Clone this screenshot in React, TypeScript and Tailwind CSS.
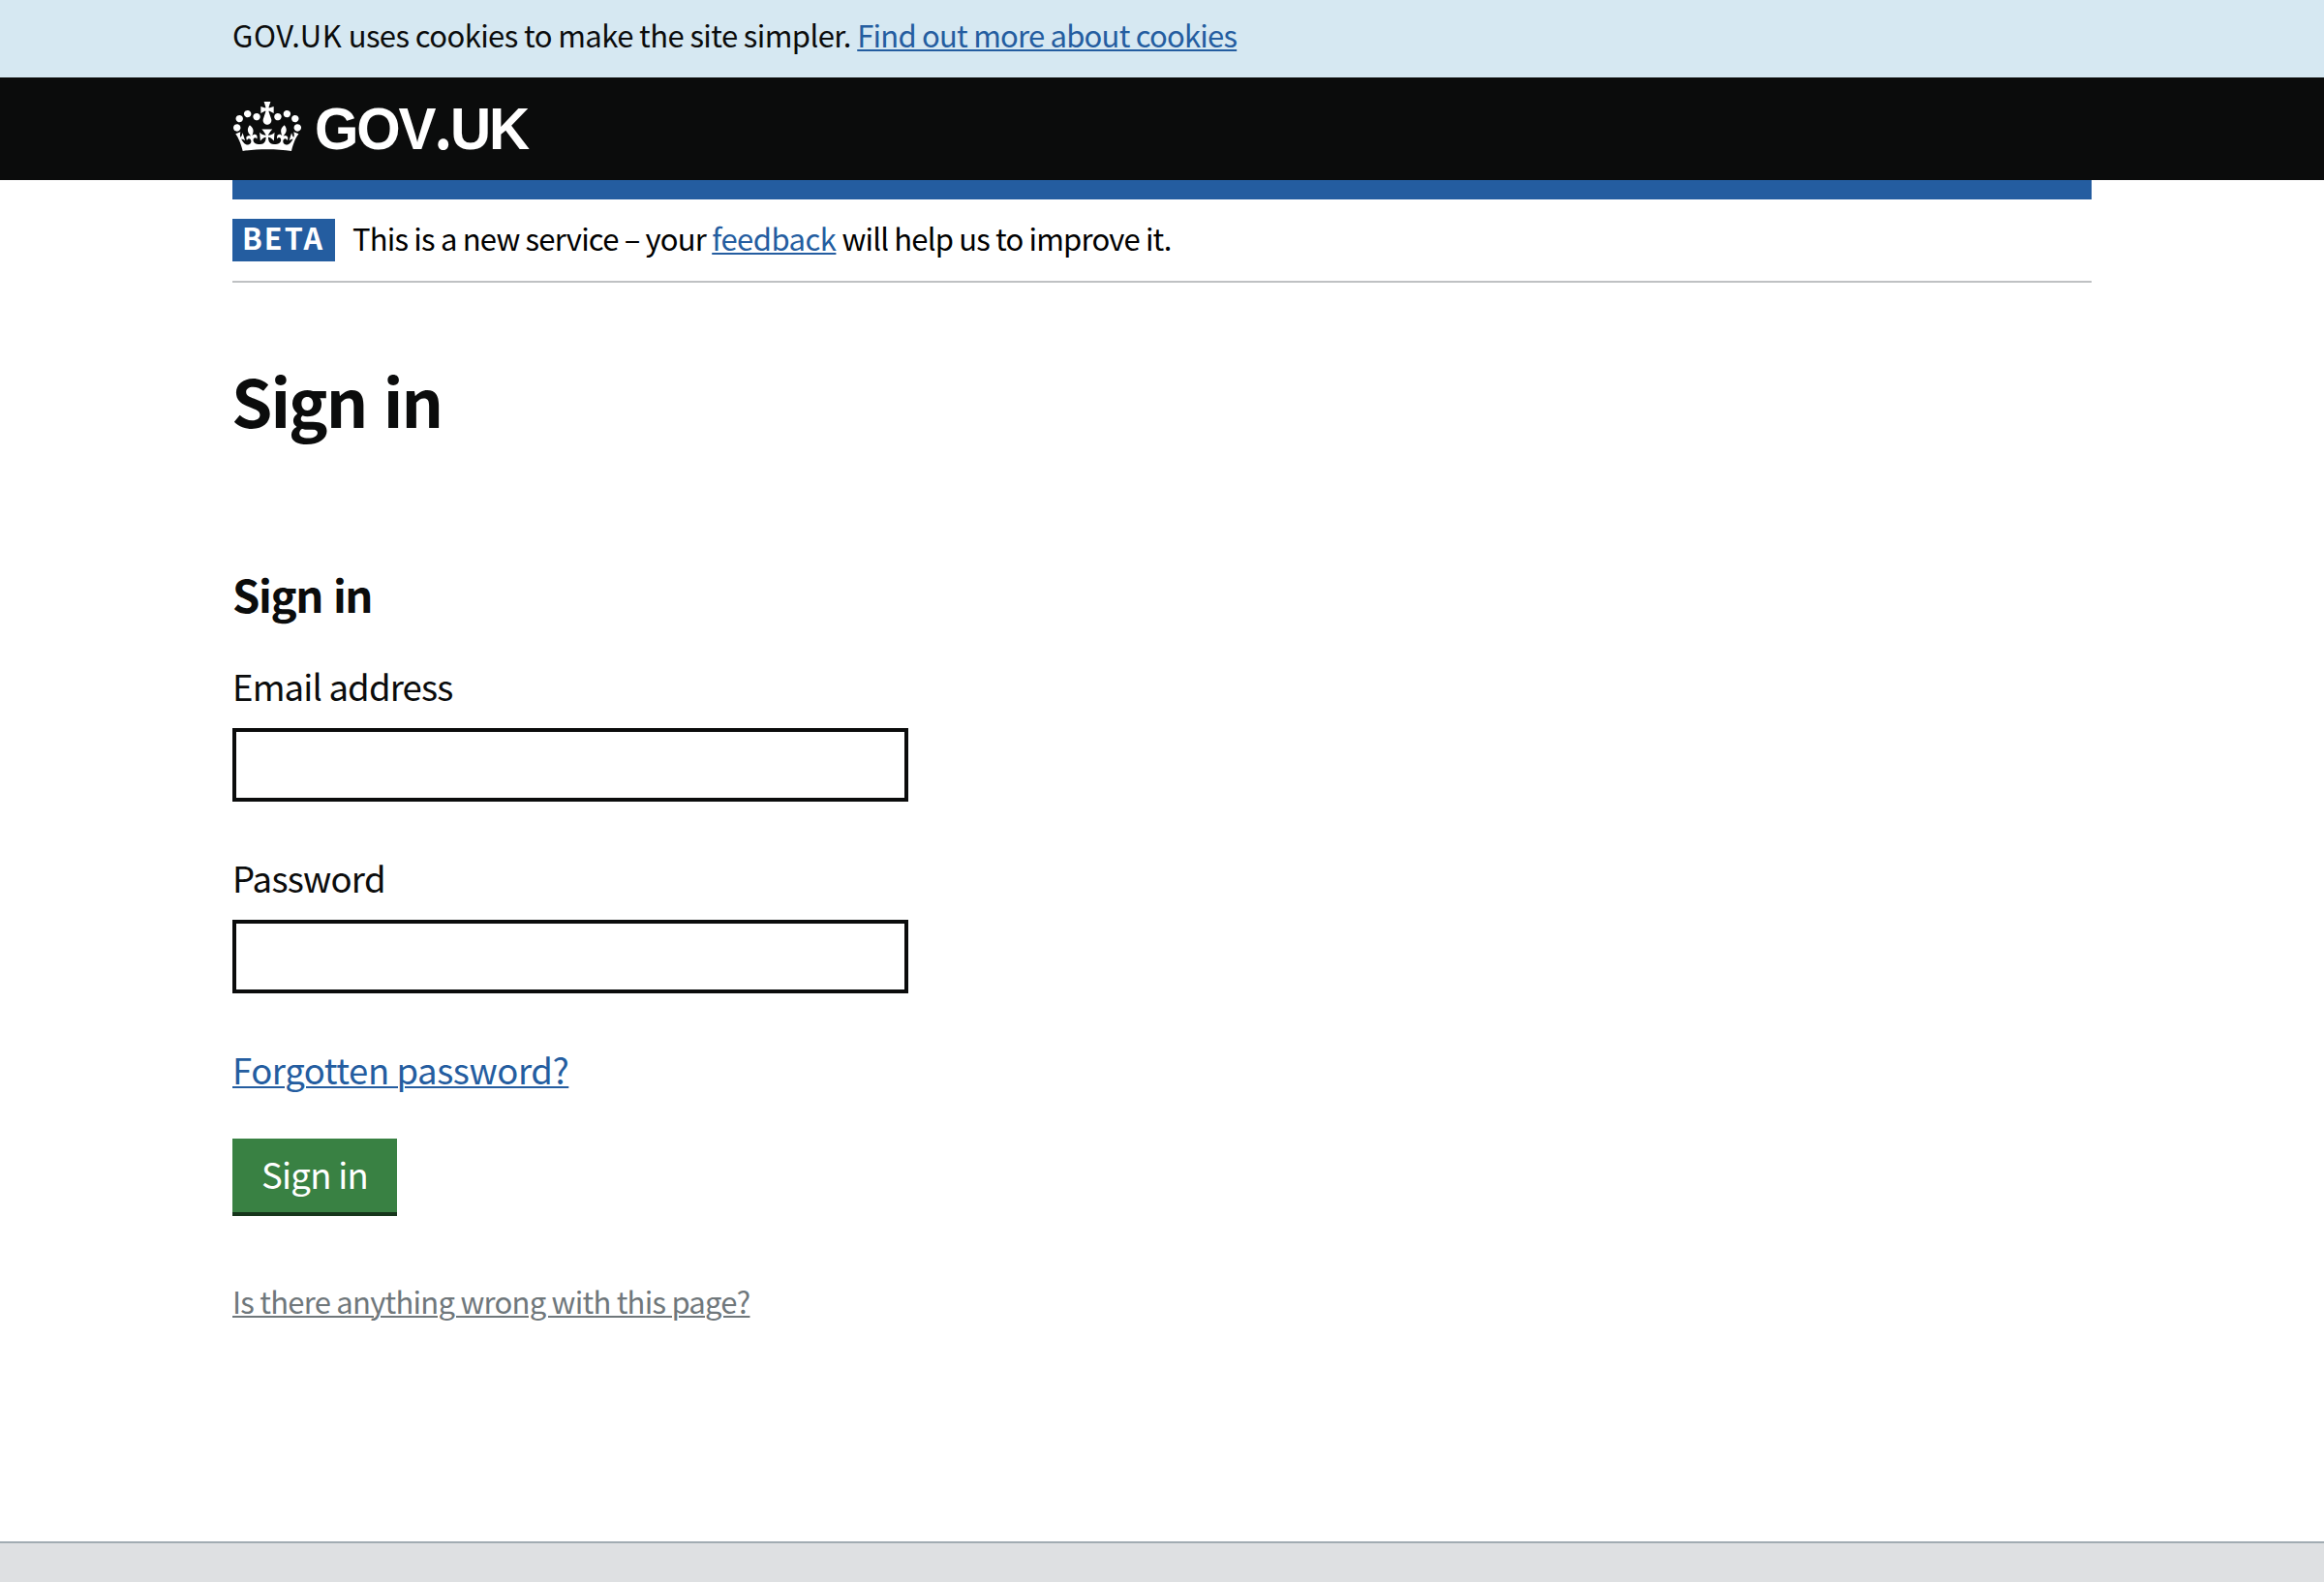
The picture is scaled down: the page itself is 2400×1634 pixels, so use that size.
import type { ReactNode } from "react";

function Crown() {
  return (
    <svg viewBox="0 0 132 97" className="mt-[24.5px] ml-px h-[51.5px] w-[70px] shrink-0" fill="#fff" aria-hidden="true">
      <path
        fillRule="evenodd"
        d="M25 30.2c3.5 1.5 7.7-.2 9.1-3.7 1.5-3.6-.2-7.8-3.9-9.2-3.6-1.4-7.6.3-9.1 3.9-1.4 3.5.3 7.5 3.9 9zM9 39.5c3.6 1.5 7.8-.2 9.2-3.7 1.5-3.6-.2-7.8-3.9-9.1-3.6-1.5-7.6.2-9.1 3.8-1.4 3.5.3 7.5 3.8 9zM4.4 57.2c3.5 1.5 7.7-.2 9.1-3.8 1.5-3.6-.2-7.7-3.9-9.1-3.5-1.5-7.6.3-9.1 3.8-1.4 3.5.3 7.6 3.9 9.1zm38.3-21.4c3.5 1.5 7.7-.2 9.1-3.8 1.5-3.6-.2-7.7-3.9-9.1-3.6-1.5-7.6.3-9.1 3.8-1.3 3.6.4 7.7 3.9 9.1zm64.4-5.6c-3.6 1.5-7.8-.2-9.1-3.7-1.5-3.6.2-7.8 3.8-9.2 3.6-1.4 7.7.3 9.2 3.9 1.3 3.5-.4 7.5-3.9 9zm15.9 9.3c-3.6 1.5-7.7-.2-9.1-3.7-1.5-3.6.2-7.8 3.7-9.1 3.6-1.5 7.7.2 9.2 3.8 1.5 3.5-.3 7.5-3.8 9zm4.7 17.7c-3.6 1.5-7.8-.2-9.2-3.8-1.5-3.6.2-7.7 3.9-9.1 3.6-1.5 7.7.3 9.2 3.8 1.3 3.5-.4 7.6-3.9 9.1zM89.3 35.8c-3.6 1.5-7.8-.2-9.2-3.8-1.4-3.6.2-7.7 3.9-9.1 3.6-1.5 7.7.3 9.2 3.8 1.4 3.6-.3 7.7-3.9 9.1zM69.7 17.7l8.9 4.7V9.3l-8.9 2.8c-.2-.3-.5-.6-.9-.9L72.4 0H59.6l3.5 11.2c-.3.3-.6.5-.9.9l-8.8-2.8v13.1l8.8-4.7c.3.3.6.7.9.9l-5 15.4v.1c-.2.8-.4 1.6-.4 2.4 0 4.1 3.1 7.5 7 8.1h.2c.3 0 .7.1 1 .1.4 0 .7 0 1-.1h.2c4-.6 7.1-4.1 7.1-8.1 0-.8-.1-1.7-.4-2.4V34l-5.1-15.4c.4-.2.7-.6 1-.9zM66 92.8c16.9 0 32.8 1.1 47.1 3.2 4-16.9 8.9-26.7 14-33.5l-9.6-3.4c1 4.9 1.1 7.2 0 10.2-1.5-1.4-3-4.3-4.2-8.7L108.6 76c2.8-2 5-3.2 7.5-3.3-4.4 9.4-10 11.9-13.6 11.2-4.3-.8-6.3-4.6-5.6-7.9 1-4.7 5.7-5.9 8-.5 4.3-8.7-3-11.4-7.6-8.8 7.1-7.2 7.9-13.5 2.1-21.1-8 6.1-8.1 12.3-4.5 20.8-4.7-5.4-12.1-2.5-9.5 6.2 3.4-5.2 7.9-2 7.2 3.1-.6 4.3-6.4 7.8-13.5 7.2-10.3-.9-10.9-8-11.2-13.8 2.5-.5 7.1 1.8 11 7.3L80.2 60c-4.1 4.4-8 5.3-12.3 5.4 1.4-4.4 8-11.6 8-11.6H55.5s6.4 7.2 7.9 11.6c-4.2-.1-8-1-12.3-5.4l1.4 16.4c3.9-5.5 8.5-7.7 10.9-7.3-.3 5.8-.9 12.8-11.1 13.8-7.2.6-12.9-2.9-13.5-7.2-.7-5 3.8-8.3 7.1-3.1 2.7-8.7-4.6-11.6-9.4-6.2 3.7-8.5 3.6-14.7-4.6-20.8-5.8 7.6-5 13.9 2.2 21.1-4.7-2.6-11.9.1-7.7 8.8 2.3-5.5 7.1-4.2 8.1.5.7 3.3-1.3 7.1-5.7 7.9-3.5.7-9-1.8-13.5-11.2 2.5.1 4.7 1.3 7.5 3.3l-4.7-15.4c-1.2 4.4-2.7 7.2-4.3 8.7-1.1-3-.9-5.3 0-10.2l-9.5 3.4c5 6.9 9.9 16.7 14 33.5 14.8-2.1 30.8-3.2 47.7-3.2z"
      />
    </svg>
  );
}

function Link({ className, children }: { className: string; children: ReactNode }) {
  return (
    <a href="#" className={"underline decoration-[2px] underline-offset-[2px] " + className}>
      {children}
    </a>
  );
}

function Field({ id, label, type, labelClass }: { id: string; label: string; type: string; labelClass: string }) {
  return (
    <div className="flex flex-col">
      <label htmlFor={id} className={"h-[50px] text-[36.5px] leading-[52px] " + labelClass}>
        {label}
      </label>
      <input id={id} type={type} className="mt-[19px] h-[76px] w-[698px] rounded-none border-4 border-[#0b0c0c] bg-white px-2 text-[36px] outline-none" />
    </div>
  );
}

export default function App() {
  return (
    <div className="flex h-[1634px] w-full flex-col overflow-hidden bg-white font-['Noto_Sans_CJK_JP',sans-serif] text-[#0b0c0c]">
      <div className="h-20 bg-[#d6e8f2] px-60 pt-[15px]">
        <p className="text-[31px] leading-[41px] whitespace-pre">
          <span className="tracking-[0.57px]">GOV.UK</span>
          <span className="tracking-[-0.58px]"> uses cookies to make the site simpler. </span>
          <Link className="tracking-[-0.78px] text-[#245da0]">Find out more about cookies</Link>
        </p>
      </div>

      <header className="flex h-[106px] items-start bg-[#0b0c0c] px-60 text-white">
        <Crown />
        <span className="ml-[14px] inline-block origin-left scale-x-[0.957] font-['Liberation_Sans',sans-serif] text-[61px] leading-[106px] font-bold tracking-[-2.3px]">
          GOV
          <span className="font-['Noto_Sans_CJK_JP',sans-serif] leading-none">.</span>
          UK
        </span>
      </header>

      <main className="mx-60 flex flex-col items-start">
        <div className="h-5 w-full bg-[#245da0]" />
        <div className="flex h-[86px] w-full items-start border-b-2 border-[#bfc1c3] pt-5 text-black">
          <strong className="h-11 w-[106px] bg-[#245da0] pl-[10px] text-[30.5px] leading-[39px] font-bold tracking-[2.1px] text-white">BETA</strong>
          <p className="ml-[18px] text-[31px] leading-[39px] whitespace-pre">
            <span className="tracking-[-0.8px]">This is a new service – your </span>
            <Link className="tracking-[-0.52px] text-[#245da0]">feedback</Link>
            <span className="tracking-[-0.82px]"> will help us to improve it.</span>
          </p>
        </div>

        <h1 className="mt-[71px] -ml-px text-[68px] leading-[100px] font-bold tracking-[-2px] [word-spacing:4px]">Sign in</h1>
        <h2 className="mt-[120px] mb-10 text-[45.5px] leading-[60px] font-bold tracking-[-1.4px] [word-spacing:2px]">Sign in</h2>

        <div className="flex flex-col gap-[53px]">
          <Field id="email" label="Email address" type="email" labelClass="tracking-[-0.84px]" />
          <Field id="password" label="Password" type="password" labelClass="tracking-[-0.74px]" />
          <p className="h-[50px] text-[36.5px] leading-[52px]">
            <Link className="tracking-[-0.43px] text-[#245da0]">Forgotten password?</Link>
          </p>
        </div>

        <button className="mt-[47px] flex h-20 w-[170px] justify-center border-b-4 border-[#16351b] bg-[#398143] pt-3 text-[36.5px] leading-[50px] tracking-[-0.74px] text-white">
          Sign in
        </button>

        <p className="mt-[67px] text-[31px] leading-[41px]">
          <Link className="tracking-[-0.75px] text-[#6f777b]">Is there anything wrong with this page?</Link>
        </p>
      </main>

      <footer className="mt-[228px] h-[42px] border-t-2 border-[#a1acb2] bg-[#dee0e2]" />
    </div>
  );
}
